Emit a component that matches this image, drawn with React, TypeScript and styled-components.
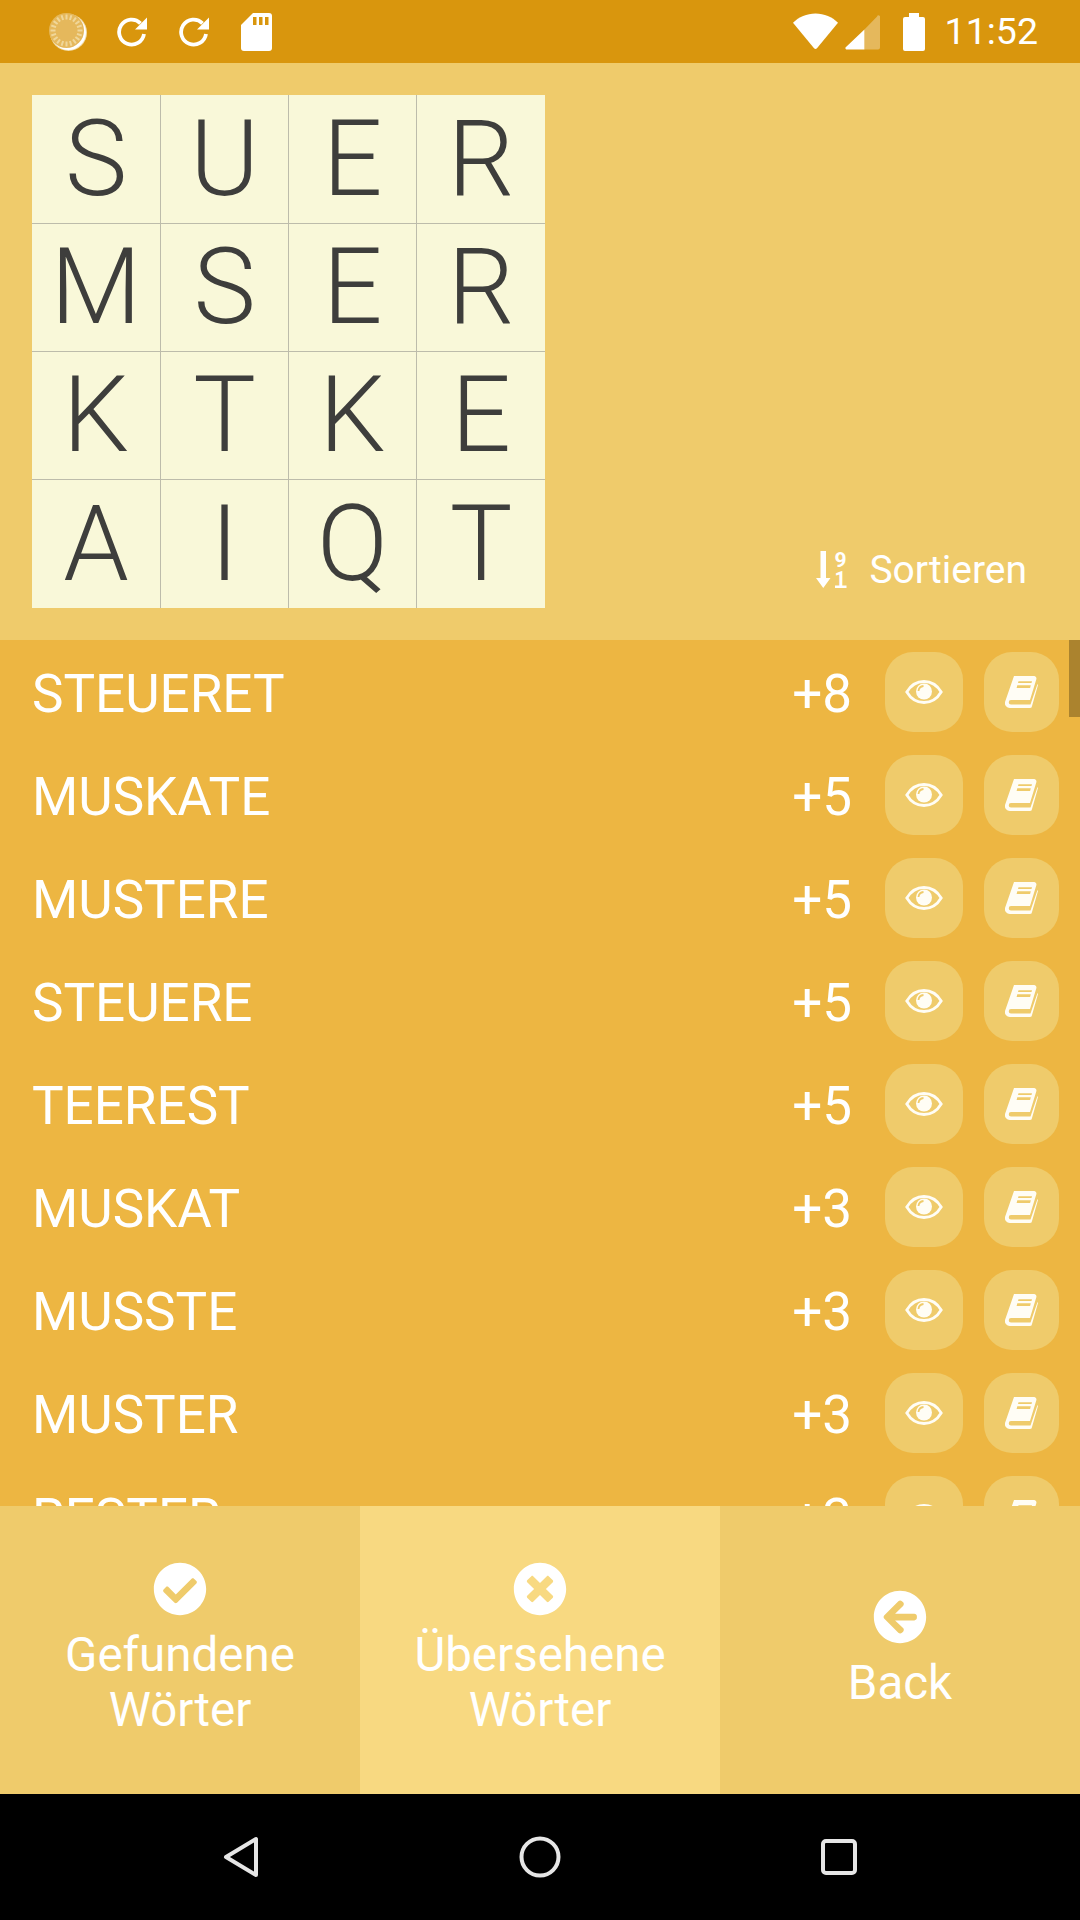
import React from 'react';
import styled, {createGlobalStyle} from 'styled-components';
import {FaCheckCircle, FaTimesCircle, FaArrowCircleLeft} from 'react-icons/fa';

const PANEL = '#efcb6b';
const LIST = '#edb642';
const ACTIVE = '#f8d981';
const ICON = '#fffdf5';

const GlobalStyle = createGlobalStyle`
	html, body {
		margin: 0;
		padding: 0;
		background: #000;
	}
	body {
		font-family: Roboto, "Noto Sans", sans-serif;
	}
`;

const Page = styled.div`
	width: 1080px;
	height: 1920px;
	display: flex;
	flex-direction: column;
	overflow: hidden;
	color: #fff;
`;

const StatusBar = styled.div`
	height: 63px;
	flex: none;
	display: flex;
	align-items: center;
	justify-content: space-between;
	padding: 0 42px 0 49px;
	background: #d9960d;
`;

const StatusGroup = styled.div<{$gap: number}>`
	display: flex;
	align-items: center;
	gap: ${(props) => props.$gap}px;
`;

const SpinnerSlot = styled.div`
	display: flex;
	margin-right: -2px;
`;

const BatterySlot = styled.div`
	display: flex;
	margin-left: 16px;
`;

const Clock = styled.span`
	font-size: 37.5px;
	line-height: 63px;
	margin-left: 13px;
`;

const TopPanel = styled.div`
	height: 577px;
	flex: none;
	box-sizing: border-box;
	padding: 32px 53px 32px 32px;
	display: flex;
	justify-content: space-between;
	align-items: flex-end;
	background: ${PANEL};
`;

const Board = styled.div`
	width: 513px;
	height: 513px;
	display: grid;
	grid-template-columns: repeat(3, 128px) 129px;
	grid-template-rows: repeat(3, 128px) 129px;
	background: #f9f8d9;
`;

const Cell = styled.div<{$left: boolean; $top: boolean}>`
	display: flex;
	align-items: center;
	justify-content: center;
	font-size: 105px;
	font-weight: 300;
	color: #3e3e3c;
	border-left: ${(props) => props.$left ? '1px solid #bdbcab' : 'none'};
	border-top: ${(props) => props.$top ? '1px solid #bdbcab' : 'none'};
`;

const SortButton = styled.div`
	display: flex;
	align-items: center;
	gap: 22px;
	height: 46px;
	margin-bottom: 15px;
	font-size: 39px;
`;

const List = styled.div`
	position: relative;
	flex: 1;
	min-height: 0;
	overflow: hidden;
	background: ${LIST};
	padding-top: 12px;
`;

const Scrollbar = styled.div`
	position: absolute;
	top: 0;
	right: 0;
	width: 11px;
	height: 77px;
	background: #ab832e;
`;

const Row = styled.div`
	height: 80px;
	margin-bottom: 23px;
	display: flex;
	align-items: center;
	padding: 0 21px 0 32px;
`;

const Word = styled.span`
	flex: 1;
	font-size: 53px;
	padding-top: 3px;
`;

const Score = styled.span`
	font-size: 53px;
	padding-top: 3px;
	margin-right: 33px;
`;

const RoundButton = styled.div<{$wide: boolean}>`
	width: ${(props) => props.$wide ? 78 : 75}px;
	height: 80px;
	margin-left: ${(props) => props.$wide ? 0 : 21}px;
	border-radius: 28px;
	background: ${PANEL};
	display: flex;
	align-items: center;
	justify-content: center;
`;

const Tabs = styled.div`
	height: 288px;
	flex: none;
	display: flex;
`;

const Tab = styled.div<{$active: boolean}>`
	flex: 1;
	display: flex;
	flex-direction: column;
	align-items: center;
	justify-content: center;
	background: ${(props) => props.$active ? ACTIVE : PANEL};
	font-size: 47.5px;
	line-height: 55px;
	text-align: center;
	svg {
		margin-bottom: 12px;
	}
`;

const NavBar = styled.div`
	height: 126px;
	flex: none;
	display: flex;
	align-items: center;
	justify-content: center;
	gap: 260px;
	background: #000;
`;

const BOARD = ['SUER', 'MSER', 'KTKE', 'AIQT'];
const WORDS: [string, number][] = [
	['STEUERET', 8], ['MUSKATE', 5], ['MUSTERE', 5], ['STEUERE', 5], ['TEEREST', 5],
	['MUSKAT', 3], ['MUSSTE', 3], ['MUSTER', 3], ['RESTER', 3],
];

const Spinner = () => (
	<svg width="38" height="38" viewBox="0 0 38 38">
		<circle cx="19.500" cy="19.500" r="18.500" fill="#f2dca8" />
		<circle cx="19.500" cy="19.500" r="17.500" fill="#fff" />
		<circle cx="17.500" cy="17.500" r="17.500" fill="#e5b85c" />
		{Array.from({length: 20}).map((_, i) => (
			<line key={i} x1="17.500" y1="1.500" x2="17.500" y2="6.500" stroke="#f0d79a" strokeWidth="2" transform={`rotate(${i * 18} 17.500 17.500)`} />
		))}
	</svg>
);

const Refresh = () => (
	<svg width="30" height="30" viewBox="0 0 30 30">
		<path d="M27 17A12.500 12.500 0 1 1 23.500 6.300" fill="none" stroke="#fff" strokeWidth="3.800" />
		<path d="M30 0.500v12H18z" fill="#fff" />
	</svg>
);

const SdCard = () => (
	<svg width="31" height="38" viewBox="0 0 31 38">
		<path d="M12 0h16a3 3 0 0 1 3 3v32a3 3 0 0 1-3 3H3a3 3 0 0 1-3-3V12z" fill="#fff" />
		<path d="M12 4h3.500v8h-3.500zM18 4h3.500v8h-3.500zM24 4h3.500v8h-3.500z" fill="#d9960d" />
	</svg>
);

const Wifi = () => (
	<svg width="45" height="37" viewBox="0 0 46 37">
		<path d="M0 9.5C6 3.5 14 0 23 0s17 3.500 23 9.500L24.500 35.500a2 2 0 0 1-3 0z" fill="#fff" />
	</svg>
);

const Signal = () => (
	<svg width="35" height="36" viewBox="0 0 36 36">
		<path d="M20 15.500 33 2a1.500 1.500 0 0 1 3 1v31a2 2 0 0 1-2 2H20z" fill="#e5b85c" />
		<path d="M20 15.500V36H2a1.500 1.500 0 0 1-1.500-2z" fill="#fff" />
	</svg>
);

const Battery = () => (
	<svg width="22" height="38" viewBox="0 0 22 38">
		<path d="M6 0h10v4h4a2 2 0 0 1 2 2v30a2 2 0 0 1-2 2H2a2 2 0 0 1-2-2V6a2 2 0 0 1 2-2h4z" fill="#fff" />
	</svg>
);

const SortIcon = () => (
	<svg width="31" height="38" viewBox="0 0 31 38">
		<path d="M4.500 0h5.500v27h4.500L7.250 37 0 27h4.500z" fill="#fff" />
		<text x="18.500" y="15.500" fontSize="21" fontWeight="700" fill="#fff" fontFamily="Roboto">9</text>
		<text x="18.500" y="35" fontSize="20" fontWeight="700" fill="#fff" fontFamily="Roboto">1</text>
		<rect x="19" y="34.500" width="11.500" height="2.500" fill="#fff" />
	</svg>
);

const EyeIcon = () => (
	<svg width="38" height="24" viewBox="0 0 38 24">
		<path d="M1.800 12C6 5 12 1.500 19 1.500S32 5 36.200 12C32 19 26 22.500 19 22.500S6 19 1.800 12z" fill="none" stroke={ICON} strokeWidth="2.800" />
		<circle cx="19" cy="11.500" r="8" fill={ICON} />
		<path d="M13.500 11a5.500 5.500 0 0 1 5-5" fill="none" stroke={PANEL} strokeWidth="1.800" />
	</svg>
);

const BookIcon = () => (
	<svg width="33" height="32" viewBox="0 0 33 32">
		<path d="M9 0h20a2.500 2.500 0 0 1 2.400 3L25 24H6a2 2 0 0 0 0 4.500h19.500L32.500 8 33 9 27 30a2 2 0 0 1-2 2H5a5 5 0 0 1-5-6z" fill={ICON} />
		<path d="M13.500 5.200h13.500l-.5 1.800h-13.500zM12.300 9.300h13.500l-.7 2.700h-13.500z" fill={PANEL} />
	</svg>
);

const NavBack = () => (
	<svg width="36" height="42" viewBox="0 0 36 42">
		<path d="M33 3v36L3 21z" fill="none" stroke="#e6e6e6" strokeWidth="4" strokeLinejoin="round" />
	</svg>
);

const NavHome = () => (
	<svg width="42" height="42" viewBox="0 0 42 42">
		<circle cx="21" cy="21" r="18.500" fill="none" stroke="#e6e6e6" strokeWidth="4" />
	</svg>
);

const NavRecent = () => (
	<svg width="36" height="36" viewBox="0 0 36 36">
		<rect x="2" y="2" width="32" height="32" rx="3" fill="none" stroke="#e6e6e6" strokeWidth="4" />
	</svg>
);

export default function App() {
	return (
		<Page>
			<GlobalStyle />
			<StatusBar>
				<StatusGroup $gap={32}>
					<SpinnerSlot><Spinner /></SpinnerSlot>
					<Refresh />
					<Refresh />
					<SdCard />
				</StatusGroup>
				<StatusGroup $gap={7}>
					<Wifi />
					<Signal />
					<BatterySlot><Battery /></BatterySlot>
					<Clock>11:52</Clock>
				</StatusGroup>
			</StatusBar>
			<TopPanel>
				<Board>
					{BOARD.map((line, y) => line.split('').map((letter, x) => (
						<Cell key={`${x}-${y}`} $left={x > 0} $top={y > 0}>{letter}</Cell>
					)))}
				</Board>
				<SortButton>
					<SortIcon />
					Sortieren
				</SortButton>
			</TopPanel>
			<List>
				<Scrollbar />
				{WORDS.map(([word, score], i) => (
					<Row key={i}>
						<Word>{word}</Word>
						<Score>+{score}</Score>
						<RoundButton $wide><EyeIcon /></RoundButton>
						<RoundButton $wide={false}><BookIcon /></RoundButton>
					</Row>
				))}
			</List>
			<Tabs>
				<Tab $active={false}>
					<FaCheckCircle size={54} color="#fff" />
					<span>Gefundene<br />Wörter</span>
				</Tab>
				<Tab $active>
					<FaTimesCircle size={54} color="#fff" />
					<span>Übersehene<br />Wörter</span>
				</Tab>
				<Tab $active={false}>
					<FaArrowCircleLeft size={54} color="#fff" />
					<span>Back</span>
				</Tab>
			</Tabs>
			<NavBar>
				<NavBack />
				<NavHome />
				<NavRecent />
			</NavBar>
		</Page>
	);
}
